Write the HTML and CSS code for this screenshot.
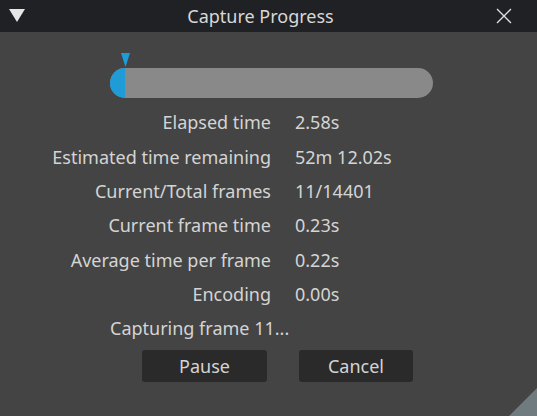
FILE: index.html
```html
<!DOCTYPE html>
<html>
<head>
<meta charset="utf-8">
<link rel="stylesheet" href="styles.css">
</head>
<body>
<div class="window">
  <div class="titlebar">
    <svg class="menu-icon" width="16" height="14" viewBox="0 0 16 14"><polygon points="0,0 16,0 8,13" fill="#e6e6e6"/></svg>
    <div class="title">Capture Progress</div>
    <svg class="close-icon" width="16" height="16" viewBox="0 0 16 16"><path d="M1 1 L15 15 M15 1 L1 15" stroke="#e0e0e0" stroke-width="1.3" fill="none"/></svg>
  </div>
  <div class="content">
    <div class="progress-wrap">
      <svg class="marker" width="9" height="14" viewBox="0 0 9 14"><polygon points="0,0 9,0 4.5,14" fill="#1f9bd8"/></svg>
      <div class="bar"><div class="fill"></div></div>
    </div>
    <div class="stats">
      <div class="label">Elapsed time</div><div class="value">2.58s</div>
      <div class="label">Estimated time remaining</div><div class="value">52m 12.02s</div>
      <div class="label">Current/Total frames</div><div class="value">11/14401</div>
      <div class="label">Current frame time</div><div class="value">0.23s</div>
      <div class="label">Average time per frame</div><div class="value">0.22s</div>
      <div class="label">Encoding</div><div class="value">0.00s</div>
    </div>
    <div class="status">Capturing frame 11...</div>
    <div class="buttons">
      <button class="btn btn-pause">Pause</button>
      <button class="btn btn-cancel">Cancel</button>
    </div>
  </div>
  <div class="grip"></div>
</div>
</body>
</html>
```

FILE: styles.css
```css
html, body {
  margin: 0;
  padding: 0;
  background: #444444;
}
.window {
  position: relative;
  width: 537px;
  height: 416px;
  overflow: hidden;
  background: #444444;
  font-family: "Noto Sans", "Open Sans", sans-serif;
  color: #d4d4d4;
}
.titlebar {
  height: 32px;
  background: #202124;
  display: flex;
  align-items: center;
  padding: 0 9px;
  box-sizing: border-box;
}
.menu-icon {
  flex: none;
}
.title {
  flex: 1;
  text-align: center;
  font-size: 18px;
  color: #d8d8d8;
  margin-left: 0px;
}
.close-icon {
  flex: none;
  margin-right: 16px;
}
.content {
  padding-top: 21px;
}
.progress-wrap {
  margin-left: 110px;
  width: 323px;
  display: flex;
  flex-direction: column;
}
.marker {
  display: block;
  margin-left: 11px;
  margin-bottom: 1px;
}
.bar {
  height: 30px;
  border-radius: 15px;
  background: #898989;
  overflow: hidden;
}
.fill {
  width: 15px;
  height: 100%;
  background: #1f9bd8;
}
.stats {
  display: grid;
  grid-template-columns: 271px auto;
  column-gap: 24px;
  grid-auto-rows: 34.4px;
  align-items: center;
  margin-top: 7px;
  font-size: 18px;
}
.label {
  text-align: right;
}
.status {
  margin-left: 110px;
  height: 34.4px;
  line-height: 34.4px;
  font-size: 18px;
}
.buttons {
  display: flex;
  margin-top: 4px;
  margin-left: 142px;
  gap: 32px;
}
.btn {
  height: 32px;
  background: #2a2a2b;
  color: #d4d4d4;
  border: none;
  border-radius: 3px;
  font-family: inherit;
  font-size: 18px;
  padding: 0;
}
.btn-pause { width: 125px; }
.btn-cancel { width: 114px; }
.grip {
  position: absolute;
  right: 0;
  bottom: 0;
  width: 28px;
  height: 28px;
  background: #6f7b7e;
  clip-path: polygon(100% 0, 100% 100%, 0 100%);
}
```
